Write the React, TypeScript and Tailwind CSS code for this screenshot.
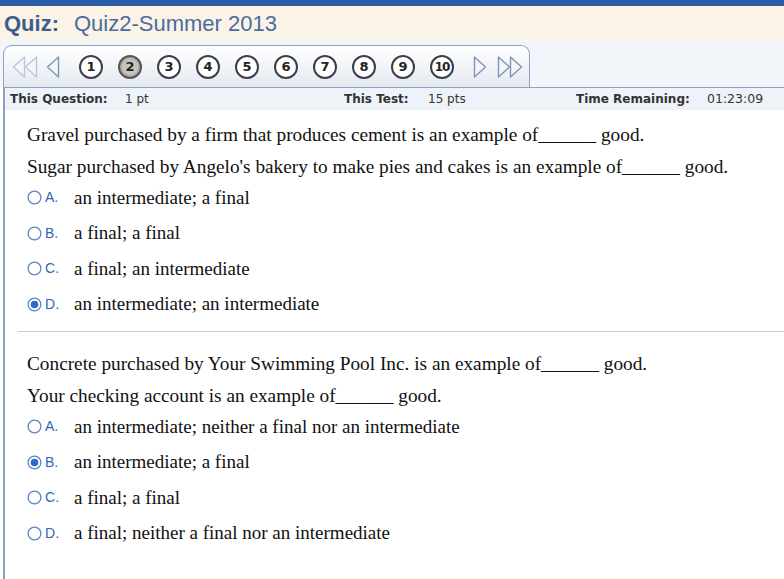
import React from "react";

// Answer option for a question
interface Option {
  letter: string;
  text: string;
}

interface Question {
  lines: string[];
  options: Option[];
  selected: string;
}

const questions: Question[] = [
  {
    lines: [
      "Gravel purchased by a firm that produces cement is an example of______ good.",
      "Sugar purchased by Angelo's bakery to make pies and cakes is an example of______ good.",
    ],
    options: [
      { letter: "A", text: "an intermediate; a final" },
      { letter: "B", text: "a final; a final" },
      { letter: "C", text: "a final; an intermediate" },
      { letter: "D", text: "an intermediate; an intermediate" },
    ],
    selected: "D",
  },
  {
    lines: [
      "Concrete purchased by Your Swimming Pool Inc. is an example of______ good.",
      "Your checking account is an example of______ good.",
    ],
    options: [
      { letter: "A", text: "an intermediate; neither a final nor an intermediate" },
      { letter: "B", text: "an intermediate; a final" },
      { letter: "C", text: "a final; a final" },
      { letter: "D", text: "a final; neither a final nor an intermediate" },
    ],
    selected: "B",
  },
];

const Radio: React.FC<{ checked: boolean }> = ({ checked }) => (
  <svg width="15" height="15" viewBox="0 0 15 15">
    <circle cx="7.5" cy="7.5" r="6.4" fill="#fff" stroke="#5a87c4" strokeWidth="1.3" />
    {checked && <circle cx="7.5" cy="7.5" r="3.8" fill="#2f6bc9" />}
  </svg>
);

const Triangle: React.FC<{ dir: "left" | "right"; color: string }> = ({ dir, color }) => (
  <svg width="14" height="24" viewBox="0 0 14 24">
    {dir === "left" ? (
      <path d="M12.5 2 L1.5 12 L12.5 22 Z" fill="#f4f6fa" stroke={color} strokeWidth="1.4" strokeLinejoin="round" />
    ) : (
      <path d="M1.5 2 L12.5 12 L1.5 22 Z" fill="#f4f6fa" stroke={color} strokeWidth="1.4" strokeLinejoin="round" />
    )}
  </svg>
);

const DoubleTriangle: React.FC<{ dir: "left" | "right"; color: string }> = ({ dir, color }) => (
  <div className="flex">
    <Triangle dir={dir} color={color} />
    <div className="-ml-[2px]">
      <Triangle dir={dir} color={color} />
    </div>
  </div>
);

const QuestionBlock: React.FC<{ q: Question }> = ({ q }) => (
  <div>
    {q.lines.map((line) => (
      <div key={line} className="h-[32px] leading-[32px] text-[19.3px] text-[#111] whitespace-nowrap">
        {line}
      </div>
    ))}
    <div className="-mt-[3px]">
      {q.options.map((o) => (
        <div key={o.letter} className="flex items-center h-[35.5px]">
          <div className="w-[18px] flex items-center">
            <Radio checked={o.letter === q.selected} />
          </div>
          <span className="w-[29px] text-[14px] text-[#2f65b8] font-['Liberation_Sans',Arial,sans-serif]">
            {o.letter}.
          </span>
          <span className="text-[19px] text-[#111] whitespace-nowrap">{o.text}</span>
        </div>
      ))}
    </div>
  </div>
);

const App: React.FC = () => {
  const nums = [1, 2, 3, 4, 5, 6, 7, 8, 9, 10];

  return (
    <div className="w-[784px] h-[579px] overflow-hidden bg-white">
      {/* Top bar */}
      <div className="h-[6px] bg-[#2c5ba6]" />
      <div className="h-[34px] bg-[#fbf3e6] flex items-center pl-[4px] font-['Liberation_Sans',Arial,sans-serif] text-[22px]">
        <span className="font-bold text-[#3d5d8e]">Quiz:</span>
        <span className="ml-[15px] text-[#4a6ca3]">Quiz2-Summer 2013</span>
      </div>

      {/* Question navigation tab */}
      <div className="bg-[#f2f5fa] pt-[5px] pl-[3px]">
        <div className="w-[527px] h-[42px] rounded-t-[9px] border border-b-0 border-[#8da2c0] bg-gradient-to-b from-white to-[#e4e9f0] flex items-center pl-[8px] font-['DejaVu_Sans',Verdana,sans-serif]">
          <DoubleTriangle dir="left" color="#bcc7d6" />
          <div className="ml-[8px]">
            <Triangle dir="left" color="#7f96b8" />
          </div>
          <div className="ml-[19px] flex gap-[15px]">
            {nums.map((n) => (
              <div
                key={n}
                className={
                  n === 2
                    ? "w-[24px] h-[24px] rounded-full border-2 border-[#555] bg-[#c9c4ba] flex items-center justify-center text-[13px] font-bold text-[#222] shadow-[inset_0_0_3px_rgba(0,0,0,0.4)]"
                    : "w-[24px] h-[24px] rounded-full border-2 border-[#3a3f4a] bg-white flex items-center justify-center text-[13px] font-bold text-[#222]"
                }
              >
                <span className={n === 10 ? "text-[12px] tracking-[-1px]" : ""}>{n}</span>
              </div>
            ))}
          </div>
          <div className="ml-[19px]">
            <Triangle dir="right" color="#7f96b8" />
          </div>
          <div className="ml-[10px]">
            <DoubleTriangle dir="right" color="#7f96b8" />
          </div>
        </div>
      </div>

      {/* Main panel */}
      <div className="ml-[3px] border-l-2 border-t border-[#8da2c0] h-full">
        <div className="h-[22px] bg-[#eef3f9] flex items-center text-[12px] text-[#333] font-['DejaVu_Sans',Verdana,sans-serif]">
          <div className="w-[339px] flex pl-[5px]">
            <span className="font-bold w-[115px]">This Question:</span>
            <span>1 pt</span>
          </div>
          <div className="w-[232px] flex">
            <span className="font-bold w-[84px]">This Test:</span>
            <span>15 pts</span>
          </div>
          <div className="flex">
            <span className="font-bold w-[131px]">Time Remaining:</span>
            <span className="text-[12.5px]">01:23:09</span>
          </div>
        </div>

        <div className="pt-[9px] font-['Liberation_Serif','Times_New_Roman',serif]">
          <div className="pl-[22px]">
            <QuestionBlock q={questions[0]} />
          </div>
          <div className="ml-[13px] mt-[9px] mb-[16px] border-t border-[#c9ccd1]" />
          <div className="pl-[22px]">
            <QuestionBlock q={questions[1]} />
          </div>
        </div>
      </div>
    </div>
  );
};

export default App;
